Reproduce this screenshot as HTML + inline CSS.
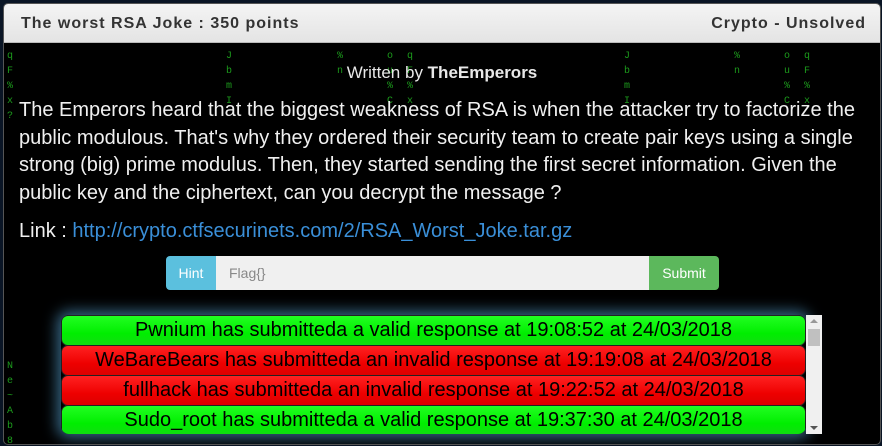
<!DOCTYPE html>
<html><head><style>
body{margin:0;width:882px;height:446px;background:#0a1525;overflow:hidden;font-family:"Liberation Sans",Arial,sans-serif;position:relative}
.panel{position:absolute;left:3px;top:3px;width:876px;height:440px;background:#000;border:1px solid #555;border-radius:5px;overflow:hidden}
.hd{height:38px;background:linear-gradient(#f4f4f4,#e4e4e4);border-bottom:1px solid #bbb;font-weight:bold;font-size:16px;color:#333;letter-spacing:1px;position:relative}
.hd .l{position:absolute;left:17px;top:11px}
.hd .r{position:absolute;right:14px;top:11px}
.g{position:absolute;color:#1c9a1c;font-family:"Liberation Mono",monospace;font-size:10px;line-height:15px}
.by{position:absolute;top:59px;left:0;width:876px;text-align:center;color:#e8e8e8;font-size:17px}
.p{position:absolute;left:15px;top:93px;width:848px;color:#f0f0f0;font-size:20px;line-height:27.5px}
.lk{position:absolute;left:15px;top:216px;color:#f0f0f0;font-size:20px}
.lk span{color:#3a8fd8}
.ig{position:absolute;left:162px;top:252px;height:34px;width:553px;display:flex;font-size:14px}
.hint{width:50px;background:#5bc0de;color:#fff;border-radius:4px 0 0 4px;display:flex;align-items:center;justify-content:center}
.in{flex:1;background:#f0f0f0;color:#888;padding-left:13px;display:flex;align-items:center}
.sub{width:70px;background:#5cb85c;color:#fff;border-radius:0 4px 4px 0;display:flex;align-items:center;justify-content:center}
.list{position:absolute;left:57px;top:311px;width:745px;height:119px;overflow:hidden;box-shadow:0 0 14px 4px rgba(90,170,220,.6);border-radius:8px}
.row{height:29px;border:1px solid #222;border-radius:7px;font-size:20px;text-align:center;line-height:29px;color:#000;margin-bottom:-1px}
.ok{background:linear-gradient(#2f2,#0e0 60%,#1d1)}
.bad{background:linear-gradient(#f22,#e00 60%,#d00)}
.sb{position:absolute;left:802px;top:311px;width:16px;height:119px;background:#f0f0f0}
.sb .t{position:absolute;left:2px;top:14px;width:12px;height:17px;background:#c0c0c0}
.sb .u,.sb .d{position:absolute;left:4px;width:0;height:0;border-left:4px solid transparent;border-right:4px solid transparent}
.sb .u{top:4px;border-bottom:4px solid #999}
.sb .d{bottom:4px;border-top:4px solid #555}
</style></head><body>
<div class="panel">
<div class="hd"><span class="l">The worst RSA Joke : 350 points</span><span class="r">Crypto - Unsolved</span></div>
<div class="g" style="left:3px;top:45px">q<br>F<br>%<br>x<br>?</div>
<div class="g" style="left:222px;top:45px">J<br>b<br>m<br>I</div>
<div class="g" style="left:333px;top:45px">%<br>n</div>
<div class="g" style="left:383px;top:45px">o<br>u<br>%<br>C</div>
<div class="g" style="left:403px;top:45px">q<br>F<br>%<br>x</div>
<div class="g" style="left:620px;top:45px">J<br>b<br>m<br>I</div>
<div class="g" style="left:730px;top:45px">%<br>n</div>
<div class="g" style="left:780px;top:45px">o<br>u<br>%<br>C</div>
<div class="g" style="left:800px;top:45px">q<br>F<br>%<br>x</div>
<div class="g" style="left:3px;top:355px">N<br>e<br>~<br>A<br>b<br>8</div>
<div class="by">Written by <b>TheEmperors</b></div>
<div class="p">The Emperors heard that the biggest weakness of RSA is when the attacker try to factorize the public modulous. That's why they ordered their security team to create pair keys using a single strong (big) prime modulus. Then, they started sending the first secret information. Given the public key and the ciphertext, can you decrypt the message ?</div>
<div class="lk">Link : <span>http://crypto.ctfsecurinets.com/2/RSA_Worst_Joke.tar.gz</span></div>
<div class="ig"><div class="hint">Hint</div><div class="in">Flag{}</div><div class="sub">Submit</div></div>
<div class="list">
<div class="row ok">Pwnium has submitteda a valid response at 19:08:52 at 24/03/2018</div>
<div class="row bad">WeBareBears has submitteda an invalid response at 19:19:08 at 24/03/2018</div>
<div class="row bad">fullhack has submitteda an invalid response at 19:22:52 at 24/03/2018</div>
<div class="row ok">Sudo_root has submitteda a valid response at 19:37:30 at 24/03/2018</div>
</div>
<div class="sb"><div class="u"></div><div class="t"></div><div class="d"></div></div>
</div>
</body></html>
